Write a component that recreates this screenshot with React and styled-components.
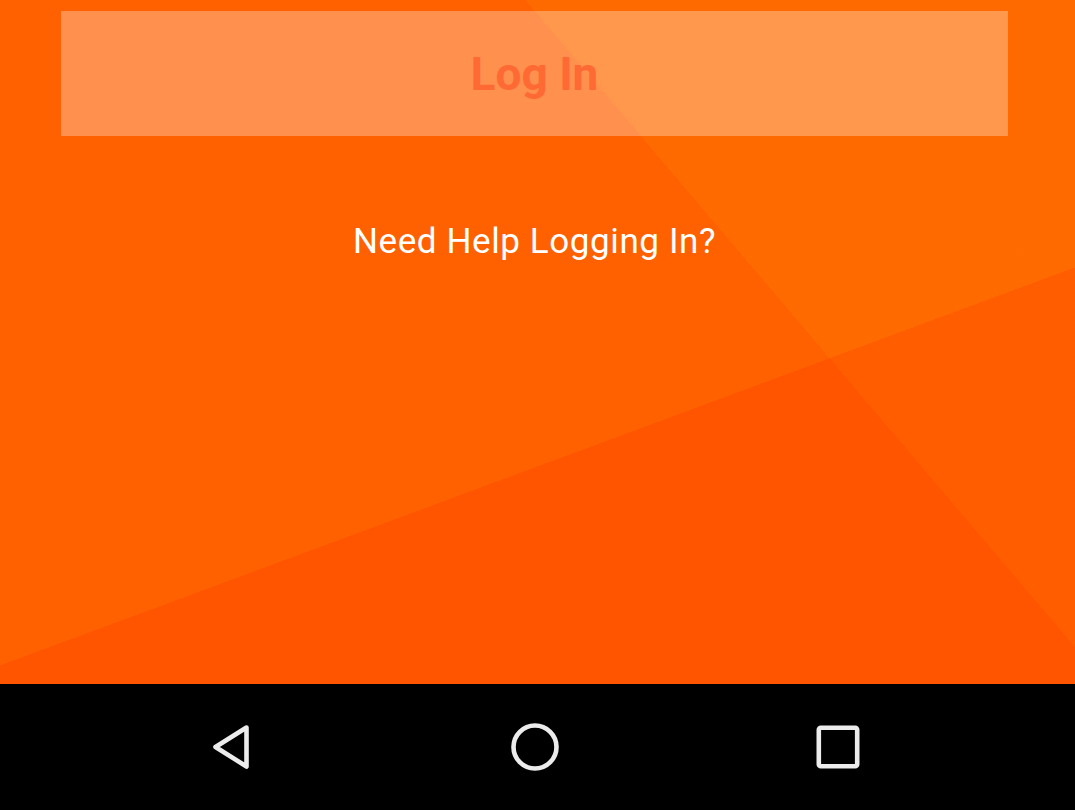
import React from "react"
import { styled, createGlobalStyle } from "styled-components"

const GlobalStyle = createGlobalStyle`
  html, body {
    margin: 0;
    padding: 0;
    height: 100%;
    background: #000;
  }
  #root {
    height: 100%;
  }
`

function BackIcon() {
  return (
    <svg width="48" height="48" viewBox="0 0 48 48" fill="none">
      <polygon points="38.5,4.5 7.5,24 38.5,43.5" stroke="currentColor" strokeWidth="4.6" strokeLinejoin="round" />
    </svg>
  )
}

function HomeIcon() {
  return (
    <svg width="48" height="48" viewBox="0 0 48 48" fill="none">
      <circle cx="24" cy="24" r="21.5" stroke="currentColor" strokeWidth="4.6" />
    </svg>
  )
}

function RecentsIcon() {
  return (
    <svg width="48" height="48" viewBox="0 0 48 48" fill="none">
      <rect x="4.8" y="4.8" width="38.4" height="38.4" rx="2" stroke="currentColor" strokeWidth="4.6" />
    </svg>
  )
}

function App() {
  return (
    <>
      <GlobalStyle />
      <Screen>
        <LoginArea>
          <LoginButton type="button">Log In</LoginButton>
          <HelpLink>Need Help Logging In?</HelpLink>
        </LoginArea>
        <NavBar>
          <NavButton aria-label="Back"><BackIcon /></NavButton>
          <NavButton aria-label="Home"><HomeIcon /></NavButton>
          <NavButton aria-label="Recents"><RecentsIcon /></NavButton>
        </NavBar>
      </Screen>
    </>
  )
}

const Screen = styled.div`
  width: 100%;
  height: 100vh;
  display: flex;
  flex-direction: column;
  font-family: Roboto, "Noto Sans", sans-serif;
`

// orange backdrop with two soft diagonal facets
const LoginArea = styled.div`
  flex: 1;
  display: flex;
  flex-direction: column;
  align-items: stretch;
  padding: 11px 67px 0 61px;
  background-color: #ff6000;
  background-image:
    linear-gradient(159.68deg, transparent 61.5%, rgba(255, 40, 0, 0.2) 61.5%),
    linear-gradient(49.65deg, transparent 66.8%, rgba(255, 130, 0, 0.3) 66.8%);
`

const LoginButton = styled.button`
  height: 125px;
  width: 100%;
  border: none;
  padding: 0;
  background: rgba(255, 255, 255, 0.3);
  color: #ff6a34;
  font-family: Roboto, "Noto Sans", sans-serif;
  font-weight: 700;
  font-size: 46px;
  display: flex;
  align-items: center;
  justify-content: center;
  cursor: pointer;
`

const HelpLink = styled.div`
  margin-top: 86px;
  text-align: center;
  color: #fff;
  font-size: 35px;
  letter-spacing: 0.6px;
  line-height: 40px;
`

const NavBar = styled.nav`
  height: 126px;
  background: #000;
  display: grid;
  grid-template-columns: repeat(3, 48px);
  column-gap: 255px;
  justify-content: center;
  align-content: center;
  padding-right: 5px;
`

const NavButton = styled.div`
  width: 48px;
  height: 48px;
  color: #ececec;
  display: flex;
`

export default App
